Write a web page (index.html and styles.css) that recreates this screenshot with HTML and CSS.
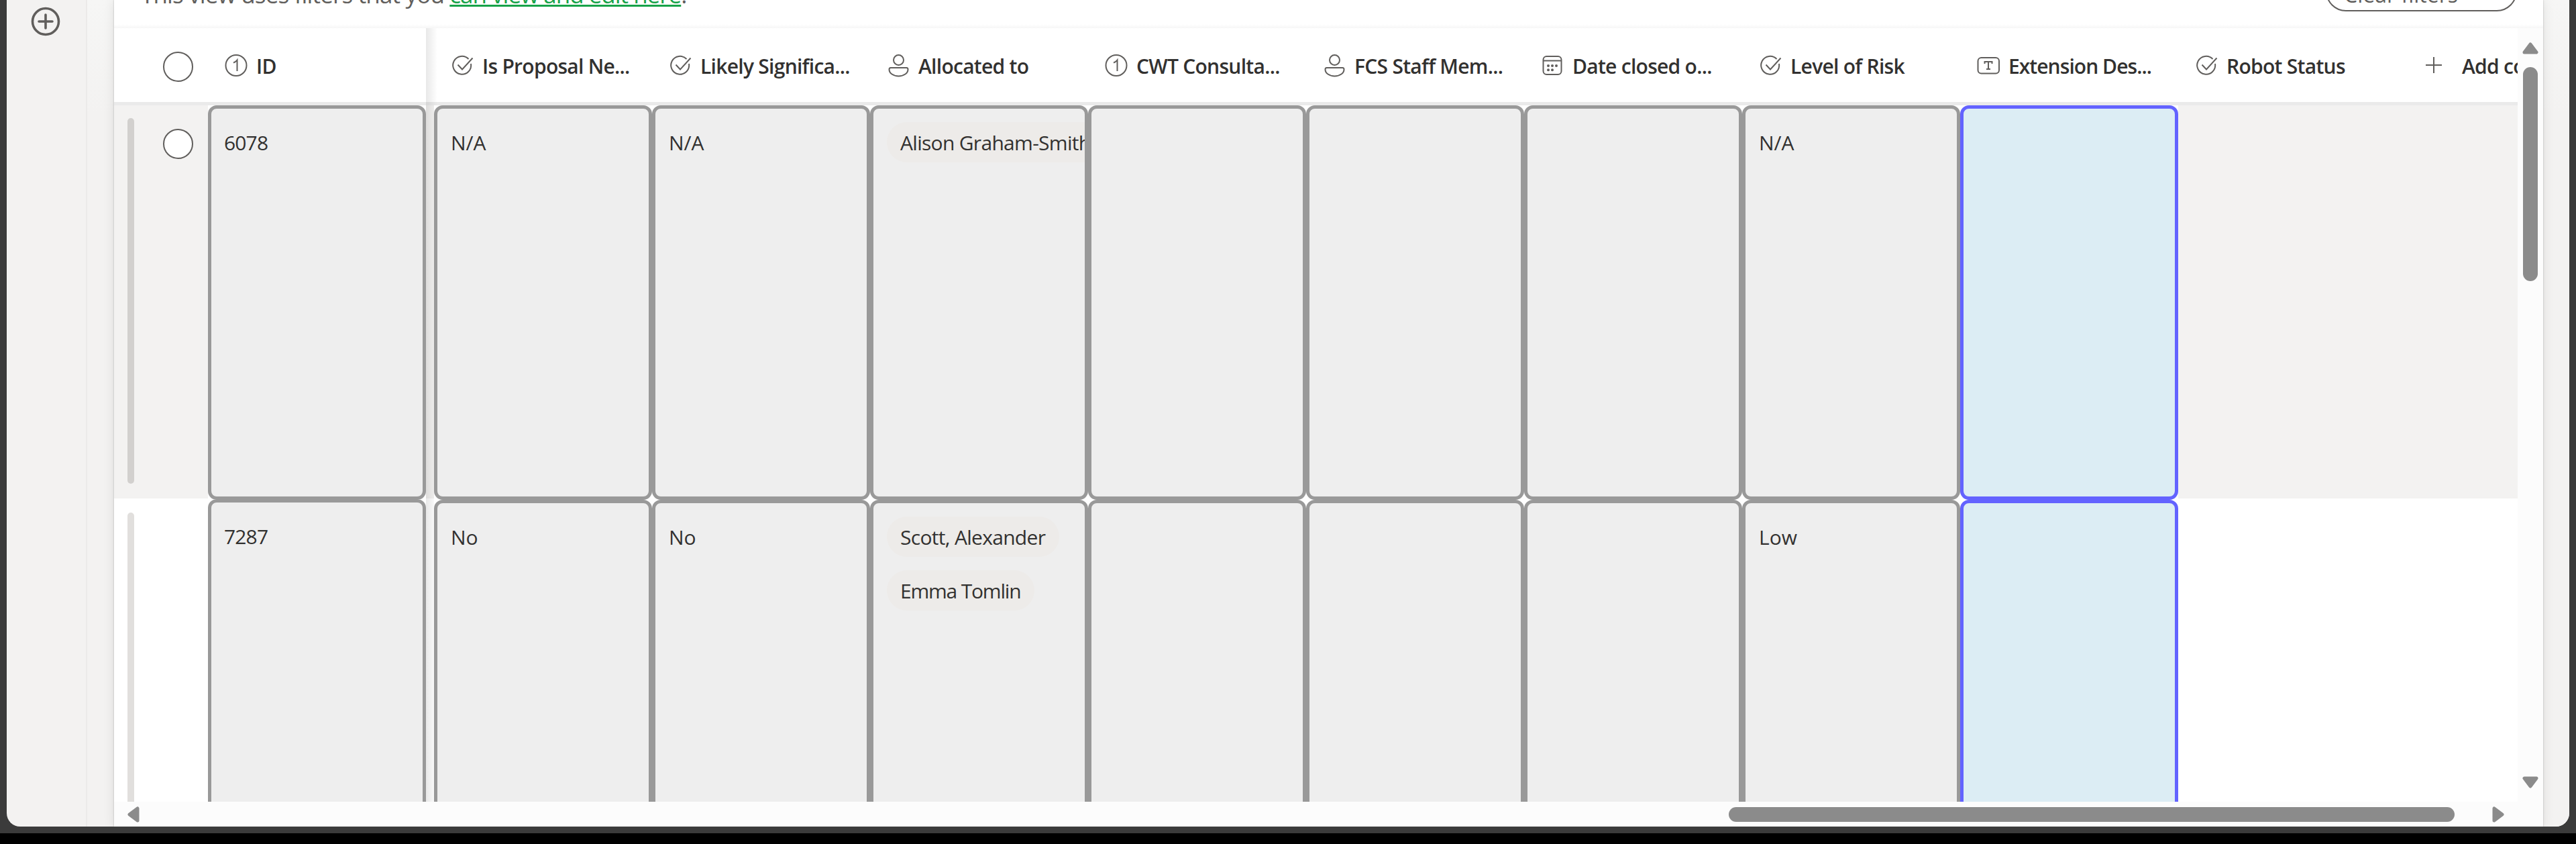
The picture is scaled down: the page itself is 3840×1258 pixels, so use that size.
FILE: index.html
```html
<!DOCTYPE html>
<html lang="en">
<head>
<meta charset="utf-8">
<title>List view</title>
<link rel="stylesheet" href="styles.css">
</head>
<body>
<svg class="sprite" width="0" height="0" aria-hidden="true">
  <symbol id="number" viewBox="0 0 35 35"><circle cx="17" cy="17.500" r="15.500"/><path d="M13 13.500c2.500-.8 4-2 5.500-4V26"/></symbol>
  <symbol id="choice" viewBox="0 0 35 35"><path d="M26.500 8A13.500 13.500 0 1 0 30 15"/><path d="M10.500 16.500l6.500 7L32.500 6.500"/></symbol>
  <symbol id="person" viewBox="0 0 35 35"><circle cx="17.500" cy="9.500" r="7.500"/><path d="M5.500 21h24q2 0 2 2.500c0 5.500-6 10-14 10s-14-4.500-14-10Q3.500 21 5.500 21z"/></symbol>
  <symbol id="date" viewBox="0 0 35 35"><rect x="3.500" y="4" width="27" height="27" rx="5"/><path d="M3.500 10.500h27"/><g class="dots"><circle cx="11" cy="18" r="2"/><circle cx="17" cy="18" r="2"/><circle cx="23" cy="18" r="2"/><circle cx="11" cy="24.300" r="2"/><circle cx="17" cy="24.300" r="2"/></g></symbol>
  <symbol id="text" viewBox="0 0 35 35"><rect x="1.500" y="6" width="31.500" height="23.500" rx="5"/><path d="M11.500 15v-3h11v3M17 12v11M14 23h6"/></symbol>
</svg>
<div class="window">
  <div class="app">
    <nav class="rail">
      <svg class="add" viewBox="0 0 44 44"><circle cx="22" cy="22" r="19.500"/><path d="M22 12v20M12 22h20"/></svg>
    </nav>
    <main class="page">
      <section class="panel">
        <div class="banner">
          <p class="notice">This view uses filters that you <a class="link">can view and edit here</a>.</p>
          <div class="clear">Clear filters</div>
        </div>
        <div class="viewport">
          <div class="table">
            <div class="row head">
              <div class="select"><span class="radio"></span></div>
              <div class="col"><svg class="icon"><use href="#number"/></svg><span class="name">ID</span></div>
              <div class="freeze"></div>
              <div class="col"><svg class="icon"><use href="#choice"/></svg><span class="name">Is Proposal Ne...</span></div>
              <div class="col"><svg class="icon"><use href="#choice"/></svg><span class="name">Likely Significa...</span></div>
              <div class="col"><svg class="icon"><use href="#person"/></svg><span class="name">Allocated to</span></div>
              <div class="col"><svg class="icon"><use href="#number"/></svg><span class="name">CWT Consulta...</span></div>
              <div class="col"><svg class="icon"><use href="#person"/></svg><span class="name">FCS Staff Mem...</span></div>
              <div class="col"><svg class="icon"><use href="#date"/></svg><span class="name">Date closed o...</span></div>
              <div class="col"><svg class="icon"><use href="#choice"/></svg><span class="name">Level of Risk</span></div>
              <div class="col tight"><svg class="icon"><use href="#text"/></svg><span class="name">Extension Des...</span></div>
              <div class="col"><svg class="icon"><use href="#choice"/></svg><span class="name">Robot Status</span></div>
              <div class="col new"><svg class="plus" viewBox="0 0 26 26"><path d="M13 1v24M1 13h24"/></svg><span class="name">Add column</span></div>
            </div>
            <div class="row first">
              <div class="select"><span class="handle"></span><span class="radio"></span></div>
              <div class="cell"><div class="box">6078</div></div>
              <div class="freeze"></div>
              <div class="cell"><div class="box tag">N/A</div></div>
              <div class="cell"><div class="box tag">N/A</div></div>
              <div class="cell"><div class="box people"><span class="pill">Alison Graham-Smith</span></div></div>
              <div class="cell"><div class="box"></div></div>
              <div class="cell"><div class="box"></div></div>
              <div class="cell"><div class="box"></div></div>
              <div class="cell"><div class="box tag">N/A</div></div>
              <div class="cell"><div class="box active"></div></div>
            </div>
            <div class="row">
              <div class="select"><span class="handle"></span></div>
              <div class="cell raised"><div class="box">7287</div></div>
              <div class="freeze"></div>
              <div class="cell"><div class="box tag">No</div></div>
              <div class="cell"><div class="box tag">No</div></div>
              <div class="cell"><div class="box people"><span class="pill">Scott, Alexander</span><span class="pill narrow">Emma Tomlin</span></div></div>
              <div class="cell"><div class="box"></div></div>
              <div class="cell"><div class="box"></div></div>
              <div class="cell"><div class="box"></div></div>
              <div class="cell"><div class="box tag">Low</div></div>
              <div class="cell"><div class="box active"></div></div>
            </div>
          </div>
          <div class="vbar">
            <svg class="arrow" viewBox="0 0 24 18"><path d="M12 3L21 15H3z"/></svg>
            <div class="vthumb"></div>
            <svg class="arrow down" viewBox="0 0 24 18"><path d="M3 3h18L12 15z"/></svg>
          </div>
        </div>
        <div class="hbar">
          <svg class="side" viewBox="0 0 18 24"><path d="M15 3v18L3 12z"/></svg>
          <div class="hthumb"></div>
          <svg class="side" viewBox="0 0 18 24"><path d="M3 3v18l12-9z"/></svg>
        </div>
      </section>
    </main>
  </div>
</div>
</body>
</html>
```

FILE: styles.css
```css
* { box-sizing: border-box; }
body {
  margin: 0;
  height: 1258px;
  overflow: hidden;
  background: #000;
  color: #323130;
  font: 30px/40px "Open Sans", "Noto Sans", sans-serif;
}
.sprite { display: block; }
.window { height: 1242px; padding: 0 10px 10px; background: #3b3b3b; }
.app {
  display: flex;
  height: 1232px;
  overflow: hidden;
  border-radius: 0 0 20px 20px;
  background: #f3f2f1;
}
.rail {
  width: 120px;
  padding: 10px 0 0 36px;
  border-right: 2px solid #ebeae9;
}
.add { display: block; width: 44px; height: 44px; fill: none; stroke: #605e5c; stroke-width: 3.6; stroke-linecap: round; }
.page { flex: 1; padding: 0 39px 0 40px; background: linear-gradient(#f6f6f5, #f3f2f1 170px); }
.panel { height: 1232px; background: #fff; box-shadow: 0 0 2px rgba(0,0,0,.25), 0 0 16px rgba(0,0,0,.1); }

.banner {
  display: flex;
  justify-content: space-between;
  align-items: flex-start;
  height: 42px;
  overflow: hidden;
  padding: 0 39px 0 40px;
  background: linear-gradient(#fff 36px, #f6f6f6);
}
.notice {
  margin: -32px 0 0;
  font-size: 35px;
  line-height: 48px;
  letter-spacing: -.83px;
  white-space: pre;
  color: #605e5c;
}
.link { color: #17a349; letter-spacing: -1px; text-decoration: underline; text-decoration-thickness: 3px; text-underline-offset: 2px; text-decoration-skip-ink: none; }
.clear {
  width: 285px;
  height: 60px;
  margin-top: -43px;
  padding: 13px 0 0 25px;
  border: 2px solid #605e5c;
  border-radius: 30px;
  font-size: 32px;
  color: #605e5c;
  white-space: nowrap;
}

.viewport { display: flex; height: 1153px; }
.table { width: 3583px; overflow: hidden; }
.row { display: flex; width: 4000px; height: 588px; }
.first { background: #f3f2f1; border-bottom: 2px solid #fff; }
.head { height: 115px; border-bottom: 5px solid #eaeaea; font-weight: 600; letter-spacing: -.72px; }
.select { display: flex; width: 140px; flex: none; padding: 35px 22px 0 20px; }
.head .select { align-items: center; padding-top: 5px; }
.radio {
  width: 45px;
  height: 45px;
  margin-left: auto;
  border: 2px solid #605e5c;
  border-radius: 50%;
  background: #fff;
}
.handle { width: 10px; height: 545px; margin-top: -16px; border-radius: 5px; background: #e1dfdd; }
.first .handle { background: #d2d0ce; }
.col { display: flex; flex: none; align-items: center; gap: 12px; width: 325px; padding-left: 25px; white-space: nowrap; }
.name { padding-top: 3px; }
.tight { letter-spacing: -.95px; }
.new { gap: 29px; padding-left: 43px; }
.icon { width: 35px; height: 35px; flex: none; fill: none; stroke: #605e5c; stroke-width: 2; }
.dots { fill: #605e5c; stroke: none; }
.plus { width: 26px; height: 26px; fill: none; stroke: #605e5c; stroke-width: 2; }
.freeze { position: relative; width: 12px; flex: none; }
.freeze::after {
  content: "";
  position: absolute;
  top: 0;
  left: 0;
  width: 17px;
  height: 588px;
  background: linear-gradient(90deg, rgba(0,0,0,.09), rgba(0,0,0,0));
}
.head .freeze::after { height: 115px; }
.cell { position: relative; width: 325px; height: 588px; flex: none; background: #fff; }
.raised { margin-top: -1px; }
.box {
  height: 100%;
  overflow: hidden;
  padding: 31px 0 0 19px;
  border: 5px solid #999;
  border-radius: 13px;
  background: #eee;
  letter-spacing: -.85px;
}
.tag { padding-left: 20px; letter-spacing: 0; }
.active { border-color: #6363ff; background: #dcedf4; }
.people { display: flex; flex-direction: column; align-items: flex-start; gap: 20px; padding: 20px 0 0 20px; }
.pill { height: 60px; padding: 1px 21px 0 20px; border-radius: 30px; line-height: 60px; background: #edebe9; letter-spacing: -.7px; white-space: nowrap; }
.narrow { letter-spacing: -1.2px; }

.vbar { display: flex; flex-direction: column; align-items: center; width: 38px; padding: 21px 0 20px; background: #fcfcfc; }
.arrow { width: 24px; height: 18px; }
.arrow, .side { display: block; fill: #8b8b8b; stroke: #8b8b8b; stroke-width: 5; stroke-linejoin: round; }
.down { margin-top: auto; }
.vthumb { width: 22px; height: 319px; margin-top: 19px; border-radius: 11px; background: #8b8b8b; }
.hbar { display: flex; align-items: center; height: 37px; padding: 1px 58px 0 20px; background: #fcfcfc; }
.side { width: 18px; height: 24px; flex: none; }
.hthumb { width: 1082px; height: 22px; margin: 0 56px 0 auto; border-radius: 11px; background: #8b8b8b; }
```
